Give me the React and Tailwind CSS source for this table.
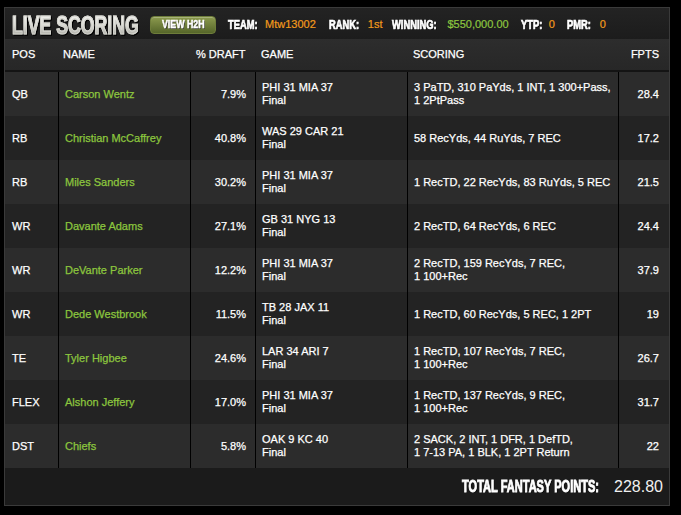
import React from "react";

const rows = [
  { pos: "QB", name: "Carson Wentz", draft: "7.9%", game: ["PHI 31 MIA 37", "Final"], scoring: ["3 PaTD, 310 PaYds, 1 INT, 1 300+Pass,", "1 2PtPass"], fpts: "28.4" },
  { pos: "RB", name: "Christian McCaffrey", draft: "40.8%", game: ["WAS 29 CAR 21", "Final"], scoring: ["58 RecYds, 44 RuYds, 7 REC"], fpts: "17.2" },
  { pos: "RB", name: "Miles Sanders", draft: "30.2%", game: ["PHI 31 MIA 37", "Final"], scoring: ["1 RecTD, 22 RecYds, 83 RuYds, 5 REC"], fpts: "21.5" },
  { pos: "WR", name: "Davante Adams", draft: "27.1%", game: ["GB 31 NYG 13", "Final"], scoring: ["2 RecTD, 64 RecYds, 6 REC"], fpts: "24.4" },
  { pos: "WR", name: "DeVante Parker", draft: "12.2%", game: ["PHI 31 MIA 37", "Final"], scoring: ["2 RecTD, 159 RecYds, 7 REC,", "1 100+Rec"], fpts: "37.9" },
  { pos: "WR", name: "Dede Westbrook", draft: "11.5%", game: ["TB 28 JAX 11", "Final"], scoring: ["1 RecTD, 60 RecYds, 5 REC, 1 2PT"], fpts: "19" },
  { pos: "TE", name: "Tyler Higbee", draft: "24.6%", game: ["LAR 34 ARI 7", "Final"], scoring: ["1 RecTD, 107 RecYds, 7 REC,", "1 100+Rec"], fpts: "26.7" },
  { pos: "FLEX", name: "Alshon Jeffery", draft: "17.0%", game: ["PHI 31 MIA 37", "Final"], scoring: ["1 RecTD, 137 RecYds, 9 REC,", "1 100+Rec"], fpts: "31.7" },
  { pos: "DST", name: "Chiefs", draft: "5.8%", game: ["OAK 9 KC 40", "Final"], scoring: ["2 SACK, 2 INT, 1 DFR, 1 DefTD,", "1 7-13 PA, 1 BLK, 1 2PT Return"], fpts: "22" },
];

const font = { fontFamily: '"Liberation Sans", Arial, sans-serif' };

export default function App() {
  return (
    <div className="w-[681px] h-[515px] bg-black pt-[7px] pl-[4px]" style={font}>
      <div className="w-[666px] h-[499px] border border-[#3a3a3a] bg-[#1b1b1b] flex flex-col">
        {/* Title bar */}
        <div className="h-[31px] flex items-center pl-[7px] pt-[2px] bg-gradient-to-b from-[#232323] to-[#1c1c1c] text-[11px] [-webkit-text-stroke:0.2px_currentColor]">
          <div className="w-[130px] h-[26px] overflow-visible [filter:drop-shadow(1px_1px_0_#000)]">
            <span className="inline-block whitespace-nowrap origin-left scale-x-[0.68] text-[26px] leading-[26px] font-bold text-[#dcdcd6] [-webkit-text-stroke:1.2px_#d4d4ce] bg-gradient-to-b from-[#f8f8f6] via-[#dcdcd6] to-[#a4a49c] bg-clip-text [-webkit-text-fill-color:transparent]">
              LIVE SCORING
            </span>
          </div>
          <div className="ml-[8px] w-[66px] h-[18px] rounded-[4px] bg-gradient-to-b from-[#8c9a4e] to-[#56662a] border border-[#6e7d3a] shadow-[inset_0_1px_0_rgba(255,255,255,0.25)] flex items-center justify-center">
            <span className="inline-block w-[43px] whitespace-nowrap">
              <span className="inline-block origin-left scale-x-[0.8] text-[11px] font-bold text-white [-webkit-text-stroke:0.5px_white] [text-shadow:1px_1px_0_#333]">VIEW H2H</span>
            </span>
          </div>
          <span className="ml-[12px] inline-block w-[30px] whitespace-nowrap">
            <span className="inline-block origin-left scale-x-[0.78] text-[12px] font-bold text-white [-webkit-text-stroke:0.7px_white] [text-shadow:1px_1px_0_#000]">TEAM:</span>
          </span>
          <span className="ml-[7px] text-[#f39a1c]">Mtw13002</span>
          <span className="ml-[13px] inline-block w-[30px] whitespace-nowrap">
            <span className="inline-block origin-left scale-x-[0.78] text-[12px] font-bold text-white [-webkit-text-stroke:0.7px_white] [text-shadow:1px_1px_0_#000]">RANK:</span>
          </span>
          <span className="ml-[9px] text-[#f39a1c]">1st</span>
          <span className="ml-[10px] inline-block w-[46px] whitespace-nowrap">
            <span className="inline-block origin-left scale-x-[0.78] text-[12px] font-bold text-white [-webkit-text-stroke:0.7px_white] [text-shadow:1px_1px_0_#000]">WINNING:</span>
          </span>
          <span className="ml-[9px] text-[#8dc63f]">$550,000.00</span>
          <span className="ml-[12px] inline-block w-[22px] whitespace-nowrap">
            <span className="inline-block origin-left scale-x-[0.78] text-[12px] font-bold text-white [-webkit-text-stroke:0.7px_white] [text-shadow:1px_1px_0_#000]">YTP:</span>
          </span>
          <span className="ml-[6px] text-[#f39a1c]">0</span>
          <span className="ml-[12px] inline-block w-[25px] whitespace-nowrap">
            <span className="inline-block origin-left scale-x-[0.78] text-[12px] font-bold text-white [-webkit-text-stroke:0.7px_white] [text-shadow:1px_1px_0_#000]">PMR:</span>
          </span>
          <span className="ml-[8px] text-[#f39a1c]">0</span>
        </div>

        {/* Header row */}
        <div className="grid grid-cols-[53px_132px_65px_152px_211px_52px] h-[33px] bg-gradient-to-b from-[#2d2d2d] to-[#272727] border-b-2 border-[#141414] text-[11px] text-white items-center [-webkit-text-stroke:0.25px_white]">
          <div className="pl-[7px]">POS</div>
          <div className="pl-[5px]">NAME</div>
          <div className="pl-[6px]">% DRAFT</div>
          <div className="pl-[6px]">GAME</div>
          <div className="pl-[6px]">SCORING</div>
          <div className="pr-[11px] text-right">FPTS</div>
        </div>

        {/* Rows */}
        {rows.map((r, i) => (
          <div
            key={i}
            className={`grid grid-cols-[53px_132px_65px_152px_211px_52px] h-[44px] text-[11px] leading-[13px] text-white [-webkit-text-stroke:0.25px_currentColor] ${i % 2 === 0 ? "bg-[#2c2c2c]" : "bg-[#232323]"}`}
          >
            <div className="pl-[7px] flex items-center">{r.pos}</div>
            <div className="pl-[6px] flex items-center border-l border-black text-[#8cc63e]">{r.name}</div>
            <div className="pr-[9px] flex items-center justify-end border-l border-black">{r.draft}</div>
            <div className="pl-[6px] flex flex-col justify-center border-l border-black whitespace-nowrap">
              {r.game.map((g, j) => (
                <div key={j}>{g}</div>
              ))}
            </div>
            <div className="pl-[6px] flex flex-col justify-center border-l border-black whitespace-nowrap">
              {r.scoring.map((s, j) => (
                <div key={j}>{s}</div>
              ))}
            </div>
            <div className="pr-[11px] flex items-center justify-end border-l border-black">{r.fpts}</div>
          </div>
        ))}

        {/* Footer */}
        <div className="flex-1 flex items-center justify-end pr-[6px] bg-[#1b1b1b]">
          <span className="inline-block w-[143px] whitespace-nowrap">
            <span className="inline-block origin-left scale-x-[0.69] text-[16px] font-bold text-white [-webkit-text-stroke:0.9px_white] [text-shadow:1px_1px_0_#000]">TOTAL FANTASY POINTS:</span>
          </span>
          <span className="ml-[9px] text-[16px] text-[#f0f0f0]">228.80</span>
        </div>
      </div>
    </div>
  );
}
